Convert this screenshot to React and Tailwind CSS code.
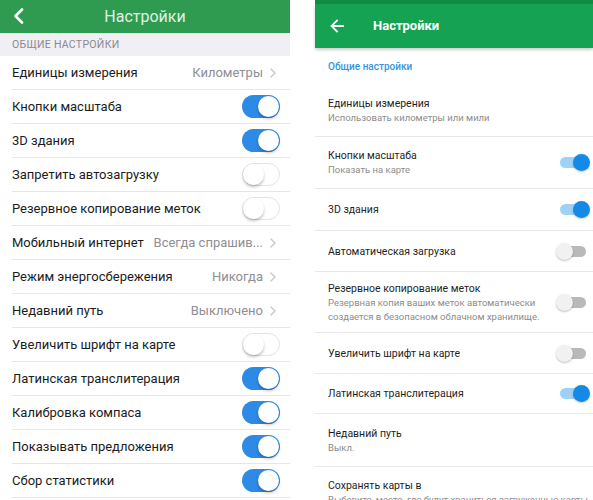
import React from 'react'

const IOS_ROWS = [
  { label: 'Единицы измерения', value: 'Километры' },
  { label: 'Кнопки масштаба', on: true },
  { label: '3D здания', on: true },
  { label: 'Запретить автозагрузку', on: false },
  { label: 'Резервное копирование меток', on: false },
  { label: 'Мобильный интернет', value: 'Всегда спрашив...' },
  { label: 'Режим энергосбережения', value: 'Никогда' },
  { label: 'Недавний путь', value: 'Выключено' },
  { label: 'Увеличить шрифт на карте', on: false },
  { label: 'Латинская транслитерация', on: true },
  { label: 'Калибровка компаса', on: true },
  { label: 'Показывать предложения', on: true },
  { label: 'Сбор статистики', on: true },
]

const ANDROID_ROWS = [
  { title: 'Единицы измерения', sub: ['Использовать километры или мили'], h: 'h-[52px]' },
  { title: 'Кнопки масштаба', sub: ['Показать на карте'], on: true, h: 'h-[52px]' },
  { title: '3D здания', on: true, h: 'h-[42px]' },
  { title: 'Автоматическая загрузка', on: false, h: 'h-[41px]' },
  {
    title: 'Резервное копирование меток',
    sub: ['Резервная копия ваших меток автоматически', 'создается в безопасном облачном хранилище.'],
    on: false,
    h: 'h-[61px]',
  },
  { title: 'Увеличить шрифт на карте', on: false, h: 'h-[41px]' },
  { title: 'Латинская транслитерация', on: true, h: 'h-[40px]' },
  { title: 'Недавний путь', sub: ['Выкл.'], h: 'h-[53px]' },
  { title: 'Сохранять карты в', sub: ['Выберите, место, где будут храниться загруженные карты'], h: 'h-[52px]' },
]

export default function App() {
  return (
    <div className="w-[593px] h-[500px] overflow-hidden bg-white flex items-start font-['Roboto',sans-serif]">
      <IosPanel />
      <div className="w-[25px] shrink-0" />
      <AndroidPanel />
    </div>
  )
}

// ─── iOS side ────────────────────────────────────────────────────────────────

function IosPanel() {
  return (
    <div className="w-[290px] shrink-0 flex flex-col">
      <div className="h-[33px] shrink-0 bg-[#2f9b50] flex items-center relative">
        <svg className="absolute left-[13px] top-[8px]" width="11" height="16" viewBox="0 0 11 16">
          <path d="M9 1.5 L2.5 8 L9 14.5" fill="none" stroke="white" strokeWidth="2.6" strokeLinecap="round" strokeLinejoin="round" />
        </svg>
        <span className="w-full text-center text-[16px] text-[#dff2e4]">Настройки</span>
      </div>
      <div className="h-[23px] shrink-0 bg-[#efeff4] flex items-center px-3 text-[10.5px] tracking-[0.3px] text-[#8a8a8f]">
        ОБЩИЕ НАСТРОЙКИ
      </div>
      {IOS_ROWS.map(row => (
        <div key={row.label} className="pl-3 shrink-0">
          <div className="h-[34px] border-b border-[#e6e6e8] flex items-center justify-between gap-2 pr-[10px]">
            <span className="text-[13px] text-[#1c1c1c] whitespace-nowrap">{row.label}</span>
            {row.value ? (
              <span className="flex items-center gap-[7px] pr-[4px] text-[13px] text-[#8e8e93] whitespace-nowrap">
                {row.value}
                <svg width="6" height="10" viewBox="0 0 6 10">
                  <path d="M1 1 L5 5 L1 9" fill="none" stroke="#c7c7cc" strokeWidth="1.4" strokeLinecap="round" strokeLinejoin="round" />
                </svg>
              </span>
            ) : (
              <IosSwitch on={row.on} />
            )}
          </div>
        </div>
      ))}
    </div>
  )
}

function IosSwitch({ on }) {
  return (
    <div
      className={`w-[38px] h-[23px] shrink-0 rounded-full relative ${
        on ? 'bg-[#2d8ae6]' : 'bg-white border-[1.5px] border-[#e3e3e6]'
      }`}
    >
      <div
        className={`absolute w-[21px] h-[21px] rounded-full bg-white shadow-[0_2px_3px_rgba(0,0,0,0.25)] ${
          on ? 'top-[1px] right-[1px]' : 'top-[-0.5px] left-[-0.5px]'
        }`}
      />
    </div>
  )
}

// ─── Android side ────────────────────────────────────────────────────────────

function AndroidPanel() {
  return (
    <div className="flex-1 flex flex-col min-w-0">
      <div className="h-[4px] shrink-0 bg-[#0f8c42]" />
      <div className="h-[44px] shrink-0 bg-[#15a252] flex items-center shadow-[0_2px_3px_rgba(0,0,0,0.2)] relative z-10">
        <svg className="ml-[15px]" width="14" height="14" viewBox="0 0 14 14">
          <path d="M13 7 H2 M7 1.5 L1.5 7 L7 12.5" fill="none" stroke="white" strokeWidth="1.8" strokeLinecap="square" />
        </svg>
        <span className="ml-[29px] text-[13px] font-bold text-white">Настройки</span>
      </div>
      <div className="h-[37px] shrink-0 flex items-center pl-[13px] text-[10px] font-medium text-[#3596e0]">
        Общие настройки
      </div>
      {ANDROID_ROWS.map(row => (
        <div
          key={row.title}
          className={`${row.h} shrink-0 border-b border-[#e8e8e8] flex items-center justify-between pl-[13px] pr-[3px]`}
        >
          <div className="flex flex-col min-w-0">
            <span className="text-[10.5px] leading-[13px] text-[#1e1e1e] whitespace-nowrap">{row.title}</span>
            {row.sub &&
              row.sub.map(s => (
                <span key={s} className="text-[9.5px] leading-[13px] mt-[1px] text-[#8c8c8c] whitespace-nowrap">
                  {s}
                </span>
              ))}
          </div>
          {row.on !== undefined && <AndroidSwitch on={row.on} />}
        </div>
      ))}
    </div>
  )
}

function AndroidSwitch({ on }) {
  return (
    <div className="w-[34px] h-[17px] relative shrink-0">
      <div
        className={`absolute left-[4px] right-[4px] top-[3px] h-[11px] rounded-full ${
          on ? 'bg-[#9fd0f5]' : 'bg-[#b9b9b9]'
        }`}
      />
      <div
        className={`absolute top-0 w-[17px] h-[17px] rounded-full shadow-[0_1px_2px_rgba(0,0,0,0.25)] ${
          on ? 'right-0 bg-[#138ae8]' : 'left-0 bg-[#f1f1f1]'
        }`}
      />
    </div>
  )
}
